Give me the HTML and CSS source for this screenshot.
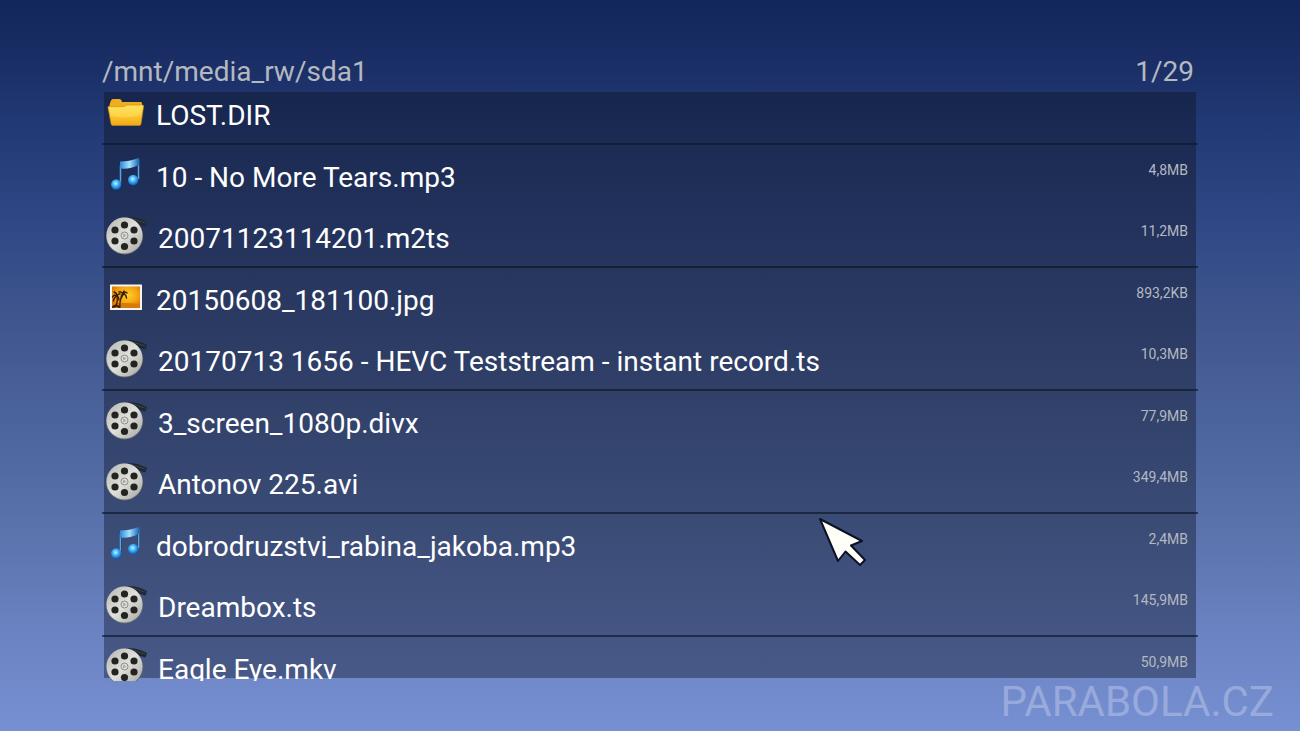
FILE: index.html
```html
<!DOCTYPE html>
<html lang="en">
<head>
    <meta charset="UTF-8">
    <meta name="viewport" content="width=device-width, initial-scale=1.0">
    <title>/mnt/media_rw/sda1</title>
    <link rel="stylesheet" href="styles.css">
</head>
<body>
    <!-- Icon definitions -->
    <svg class="sprite" aria-hidden="true">
        <defs>
            <linearGradient id="folder-front" x1="0" y1="0" x2="0" y2="1">
                <stop offset="0" stop-color="#ffe04e"/>
                <stop offset="0.5" stop-color="#fcc82e"/>
                <stop offset="1" stop-color="#f0a817"/>
            </linearGradient>
            <radialGradient id="note-ball" cx="0.45" cy="0.4" r="0.6">
                <stop offset="0" stop-color="#c8f6ff"/>
                <stop offset="0.45" stop-color="#45b8fa"/>
                <stop offset="1" stop-color="#0a5cc4"/>
            </radialGradient>
            <linearGradient id="note-beam" x1="0" y1="0" x2="1" y2="0">
                <stop offset="0" stop-color="#2a8ade"/>
                <stop offset="0.5" stop-color="#a5e0fb"/>
                <stop offset="1" stop-color="#166bbd"/>
            </linearGradient>
            <linearGradient id="reel-face" x1="0" y1="0" x2="1" y2="1">
                <stop offset="0" stop-color="#b4b4b0"/>
                <stop offset="0.5" stop-color="#e0e0dc"/>
                <stop offset="1" stop-color="#a4a49f"/>
            </linearGradient>
            <radialGradient id="sunset" cx="0.55" cy="0.4" r="0.7">
                <stop offset="0" stop-color="#ffd12e"/>
                <stop offset="0.5" stop-color="#f7a912"/>
                <stop offset="1" stop-color="#d66c06"/>
            </radialGradient>
        </defs>
        <symbol id="icon-folder" viewBox="0 0 40 42">
            <path d="M4 12 5 9.5Q5.500 8 7 8H13.500Q15 8 15.500 9.500L16 11H35Q36 11 36 13V17H3Z" fill="#eeae20"/>
            <path d="M2.500 15.500H18L21 14H36.500Q37.800 14 37.600 15.500L35 33Q34.700 34.500 33 34.500H7Q5.400 34.500 5.100 33L2 16.500Q2 15.500 2.500 15.500Z" fill="url(#folder-front)" stroke="#c98b1c" stroke-width="0.600"/>
            <path d="M3.500 17H18L21 15.300H36L35 23Q24 29 4.700 25Z" fill="#fff08a" opacity="0.300"/>
        </symbol>
        <symbol id="icon-music" viewBox="0 0 40 42">
            <path d="M14.500 30V12M32.500 26V6.500" stroke="#64a3cf" stroke-width="1.500" fill="none"/>
            <path d="M14 8.500Q23 8.500 33 5V12Q24 16.500 14 15.500Z" fill="url(#note-beam)"/>
            <path d="M15.500 15.500V30M31.500 12V26" stroke="#1d4c86" stroke-width="1" fill="none"/>
            <circle cx="10.200" cy="31.500" r="5.200" fill="url(#note-ball)"/>
            <circle cx="27.200" cy="27" r="5.200" fill="url(#note-ball)"/>
        </symbol>
        <symbol id="icon-film" viewBox="0 0 42 42">
            <path d="M20 3.500Q31 2 41 8L39.500 12.500Q31 9.500 24 9Z" fill="#202832"/>
            <path d="M25 4.500 39 9" stroke="#3a444f" stroke-width="1" fill="none"/>
            <circle cx="18.500" cy="22" r="18.500" fill="#6e706e"/>
            <circle cx="18.500" cy="21.500" r="18" fill="url(#reel-face)"/>
            <g fill="#22241f">
                <circle cx="18.500" cy="11" r="3.600"/>
                <circle cx="28" cy="16" r="3.600"/>
                <circle cx="28" cy="27" r="3.600"/>
                <circle cx="18.500" cy="32.500" r="3.600"/>
                <circle cx="9" cy="27" r="3.600"/>
                <circle cx="9" cy="16" r="3.600"/>
            </g>
            <circle cx="18.500" cy="21.500" r="3.500" fill="#deded8" stroke="#8d8d88" stroke-width="1"/>
            <path d="M17 19.500V23.500L20.500 21.500Z" fill="#a8a8a4"/>
        </symbol>
        <symbol id="icon-image" viewBox="0 0 40 42">
            <rect x="4" y="8.500" width="32" height="25.500" rx="0.500" fill="#f8f5ee"/>
            <rect x="6" y="10.500" width="28" height="21.500" fill="url(#sunset)"/>
            <path d="M6 28Q16 26 34 28V32H6Z" fill="#d67a0a"/>
            <g fill="none" stroke="#3a1c08" stroke-linecap="round">
                <path d="M9 31Q12 28 11 20M14 31Q13 25 17 19" stroke-width="1.300"/>
                <path d="M11 20Q8 18 6.500 21M11 20Q8 21 7.500 25M11 20Q13 21 13 24M11 20Q11 17 8 16M11 20Q13 17 14 18M17 18Q15 19 15 22M17 18Q20 18 20.500 22M17 18Q19 15 21 17M17 18Q15 15 13 16M17 18Q17 16 18 15" stroke-width="1.400"/>
                <path d="M7 31Q10 28 13 31" stroke-width="2"/>
            </g>
        </symbol>
    </svg>

    <header class="path-bar">
        <h1>/mnt/media_rw/sda1</h1>
        <span class="position">1/29</span>
    </header>

    <main class="file-panel">
        <ul class="file-list">
            <li><a href="#"><svg class="icon"><use href="#icon-folder"/></svg><span class="name">LOST.DIR</span></a></li>
            <li><a href="#"><svg class="icon"><use href="#icon-music"/></svg><span class="name">10 - No More Tears.mp3</span><span class="size">4,8MB</span></a></li>
            <li><a href="#"><svg class="icon film"><use href="#icon-film"/></svg><span class="name">20071123114201.m2ts</span><span class="size">11,2MB</span></a></li>
            <li><a href="#"><svg class="icon"><use href="#icon-image"/></svg><span class="name">20150608_181100.jpg</span><span class="size">893,2KB</span></a></li>
            <li><a href="#"><svg class="icon film"><use href="#icon-film"/></svg><span class="name">20170713 1656 - HEVC Teststream - instant record.ts</span><span class="size">10,3MB</span></a></li>
            <li><a href="#"><svg class="icon film"><use href="#icon-film"/></svg><span class="name">3_screen_1080p.divx</span><span class="size">77,9MB</span></a></li>
            <li><a href="#"><svg class="icon film"><use href="#icon-film"/></svg><span class="name">Antonov 225.avi</span><span class="size">349,4MB</span></a></li>
            <li><a href="#"><svg class="icon"><use href="#icon-music"/></svg><span class="name">dobrodruzstvi_rabina_jakoba.mp3</span><span class="size">2,4MB</span></a></li>
            <li><a href="#"><svg class="icon film"><use href="#icon-film"/></svg><span class="name">Dreambox.ts</span><span class="size">145,9MB</span></a></li>
            <li><a href="#"><svg class="icon film"><use href="#icon-film"/></svg><span class="name">Eagle Eye.mkv</span><span class="size">50,9MB</span></a></li>
        </ul>
    </main>

    <svg class="pointer" viewBox="0 0 50 52" aria-hidden="true">
        <path d="M1 2 43 24 32 28.500 46 43 41 48 26.500 34.500 19 44Z" fill="#fffffa" stroke="#0c1226" stroke-width="2" stroke-linejoin="round"/>
    </svg>
    <div class="watermark">PARABOLA.CZ</div>
</body>
</html>
```
FILE: styles.css
```css
* {
    margin: 0;
    padding: 0;
    box-sizing: border-box;
}

body {
    display: flex;
    flex-direction: column;
    height: 100vh;
    padding: 52px 8% 53px;
    overflow: hidden;
    font-family: Roboto, "Liberation Sans", sans-serif;
    color: #fff;
    background: linear-gradient(#11265a 0%, #1c3068 10%, #213a75 17%, #2f4885 30%, #42588f 46%, #5069a3 63%, #5d76b0 75%, #6c84c4 88%, #7790d1 100%);
}

.sprite {
    position: absolute;
    width: 0;
    height: 0;
}

/* Path and position */
.path-bar {
    display: flex;
    justify-content: space-between;
    height: 40px;
    margin-left: -2px;
    padding-right: 2px;
    font-size: 28px;
    line-height: 40px;
    color: #b4b8c1;
}

.path-bar h1 {
    font-size: 28px;
    font-weight: 400;
}

/* File list */
.file-panel {
    flex: 1;
    min-height: 0;
    margin: 0 -2px -3px;
    padding: 0 2px 3px;
    overflow: hidden;
    background: linear-gradient(rgba(18, 26, 50, 0.55), rgba(38, 50, 82, 0.55)) content-box;
}

.file-list {
    margin: -9px -2px 0;
    list-style: none;
}

.file-list li {
    height: 61px;
}

.file-list li:nth-child(odd) {
    height: 62px;
    border-bottom: 2px solid rgba(10, 18, 32, 0.6);
}

.file-list li:first-child {
    border-bottom-color: rgba(10, 18, 32, 0.5);
}

.file-list a {
    display: flex;
    height: 61px;
    padding: 8px 10px 0 4px;
    color: inherit;
    text-decoration: none;
}

.icon {
    flex: none;
    width: 40px;
    height: 42px;
    margin-right: 10px;
}

.icon.film {
    width: 42px;
}

.name {
    flex: 1;
    padding-top: 7px;
    font-size: 28px;
    line-height: 36px;
    white-space: nowrap;
}

.size {
    padding-top: 7px;
    font-size: 14px;
    line-height: 20px;
    color: #b4b8c1;
}

/* Overlays */
.pointer {
    position: absolute;
    top: 517px;
    left: 63%;
    width: 50px;
    height: 52px;
}

.watermark {
    position: absolute;
    right: 26px;
    bottom: 2px;
    font-size: 42px;
    line-height: 54px;
    color: rgba(190, 200, 235, 0.5);
}
```
